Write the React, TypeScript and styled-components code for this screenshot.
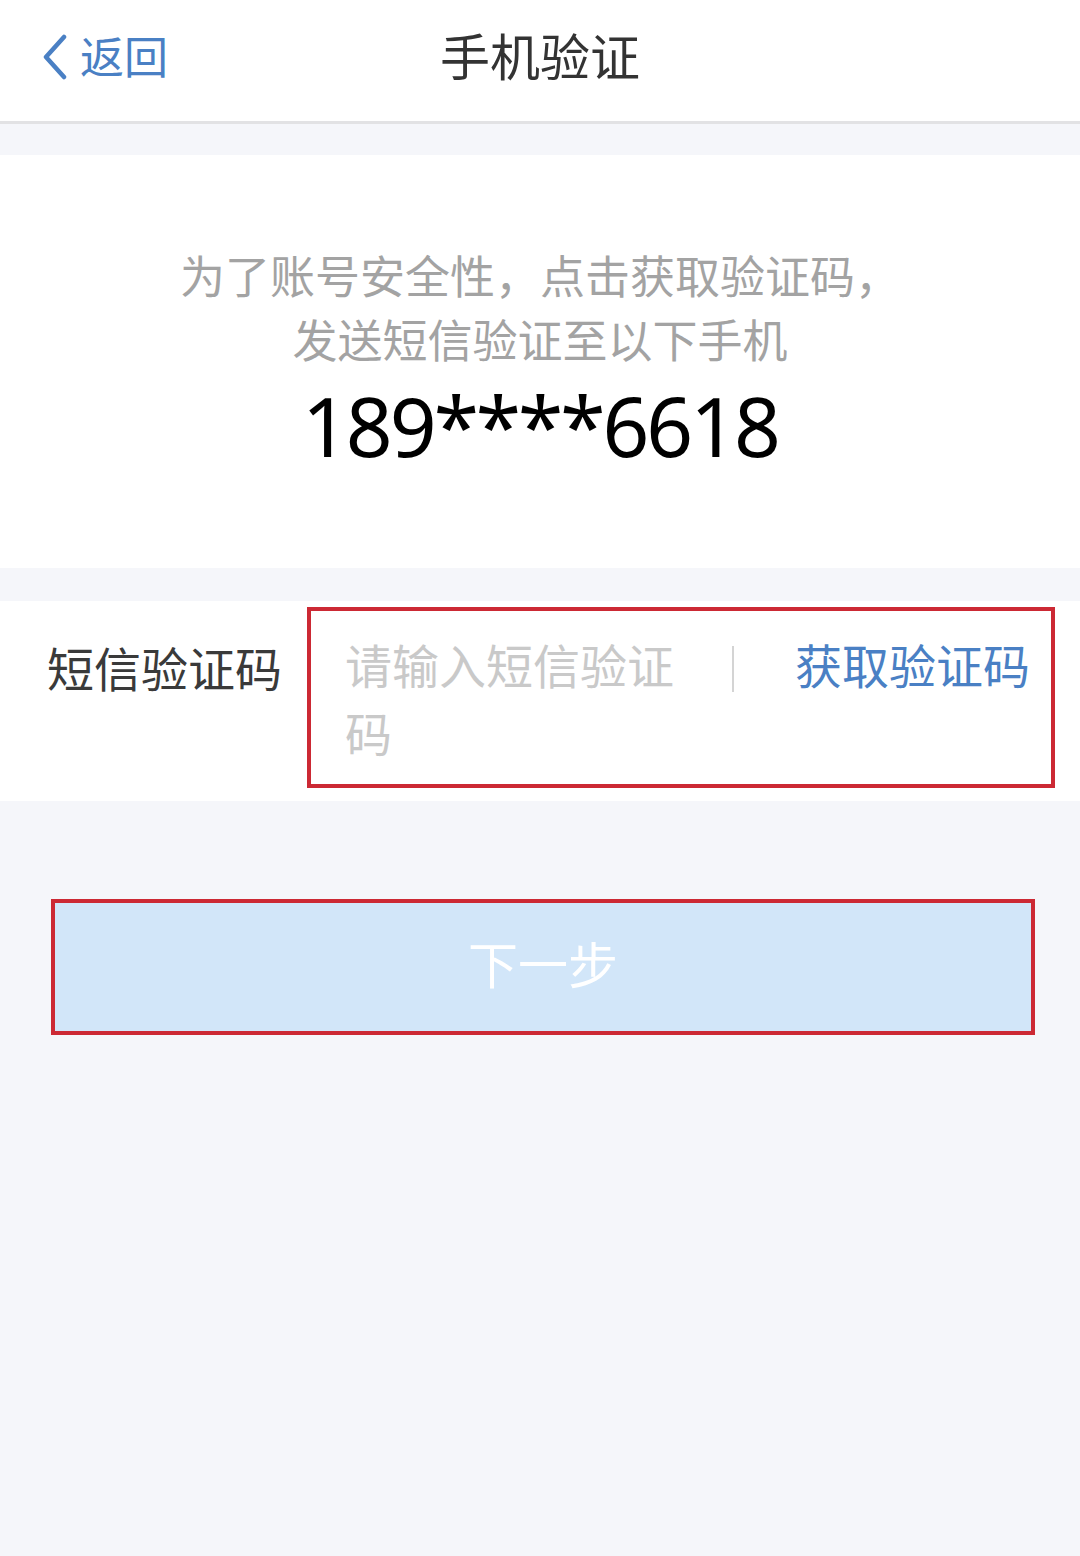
import React, { useState } from 'react'
import styled, { createGlobalStyle } from 'styled-components'

const GlobalStyle = createGlobalStyle`
  html, body {
    margin: 0;
    padding: 0;
    background-color: #f5f6fa;
  }
  * {
    box-sizing: border-box;
  }
`

const FONT = `"Noto Sans", "Noto Sans CJK SC", sans-serif`

const Page = styled.div`
  width: 1080px;
  min-height: 1556px;
  background-color: #f5f6fa;
  font-family: ${FONT};
`

const NavBar = styled.header`
  position: relative;
  height: 124px;
  background-color: #ffffff;
  border-bottom: 3px solid #e2e2e4;
  display: flex;
  align-items: center;
  justify-content: center;
`

const BackLink = styled.button`
  position: absolute;
  left: 40px;
  top: 30px;
  display: flex;
  align-items: center;
  gap: 10px;
  padding: 0;
  border: none;
  background: transparent;
  color: #4a80c4;
  font-family: ${FONT};
  font-size: 44px;
  line-height: 54px;
  cursor: pointer;
`

const Title = styled.h1`
  margin: 0 0 12px;
  font-size: 50px;
  font-weight: 400;
  color: #333333;
`

const InfoPanel = styled.section`
  margin-top: 31px;
  height: 413px;
  background-color: #ffffff;
  display: flex;
  flex-direction: column;
  align-items: center;
  padding-top: 90px;
`

const Hint = styled.p`
  margin: 0;
  font-size: 45px;
  line-height: 64px;
  color: #a3a3a3;
  text-align: center;
`

const Phone = styled.div`
  margin-top: 12px;
  font-size: 82px;
  line-height: 80px;
  color: #000000;
  letter-spacing: -3px;
`

const CodeRow = styled.div`
  margin-top: 33px;
  height: 200px;
  background-color: #ffffff;
  display: flex;
  align-items: flex-start;
  padding: 6px 25px 0 47px;
`

const Label = styled.span`
  width: 260px;
  margin-top: 28px;
  font-size: 47px;
  line-height: 68px;
  color: #3a3a3a;
  white-space: nowrap;
`

const CodeField = styled.div`
  flex: 1;
  height: 181px;
  border: 4px solid #cc2934;
  display: flex;
  align-items: flex-start;
  padding: 21px 21px 0 34px;
`

const Placeholder = styled.div`
  width: 345px;
  font-size: 47px;
  line-height: 68px;
  color: #c9c9c9;
`

const Divider = styled.span`
  width: 2px;
  height: 46px;
  margin: 14px 0 0 42px;
  background-color: #d4d4d4;
`

const GetCode = styled.button`
  margin-left: auto;
  padding: 0;
  border: none;
  background: transparent;
  font-family: ${FONT};
  font-size: 47px;
  line-height: 68px;
  color: #4a80c4;
  white-space: nowrap;
  cursor: pointer;
`

const ButtonFrame = styled.div`
  margin: 98px 45px 0 51px;
  height: 136px;
  border: 4px solid #cc2934;
`

const NextButton = styled.button<{ disabled?: boolean }>`
  width: 100%;
  height: 100%;
  border: none;
  background-color: ${({ disabled }) => (disabled ? '#d2e6f9' : '#4a80c4')};
  color: #ffffff;
  font-family: ${FONT};
  font-size: 50px;
  padding: 0 0 10px;
  cursor: pointer;
`

const ChevronLeft = () => (
  <svg width='30' height='46' viewBox='0 0 30 46' fill='none'>
    <path d='M24 3 L6 23 L24 43' stroke='#4a80c4' strokeWidth='4.5' strokeLinecap='round' strokeLinejoin='round' />
  </svg>
)

export default function App() {
  const [code] = useState('')

  return (
    <Page>
      <GlobalStyle />
      <NavBar>
        <BackLink type='button'>
          <ChevronLeft />
          返回
        </BackLink>
        <Title>手机验证</Title>
      </NavBar>
      <InfoPanel>
        <Hint>为了账号安全性，点击获取验证码，</Hint>
        <Hint>发送短信验证至以下手机</Hint>
        <Phone>189****6618</Phone>
      </InfoPanel>
      <CodeRow>
        <Label>短信验证码</Label>
        <CodeField>
          <Placeholder>{code || '请输入短信验证码'}</Placeholder>
          <Divider />
          <GetCode type='button'>获取验证码</GetCode>
        </CodeField>
      </CodeRow>
      <ButtonFrame>
        <NextButton type='button' disabled={!code}>
          下一步
        </NextButton>
      </ButtonFrame>
    </Page>
  )
}
